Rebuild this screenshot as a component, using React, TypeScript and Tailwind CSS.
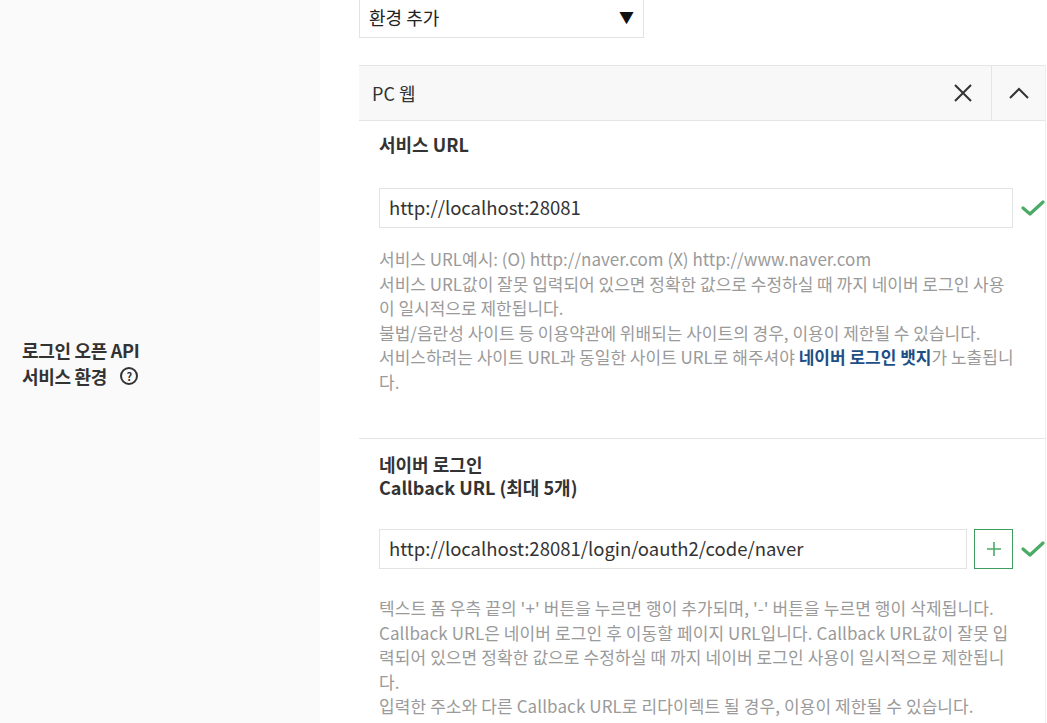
import React from 'react';

const font = { fontFamily: '"Noto Sans CJK KR", "Noto Sans", sans-serif' };

const Check = () => (
  <svg width="24" height="18" viewBox="0 0 24 18" className="shrink-0">
    <path d="M2 9 L9 15 L22 3" fill="none" stroke="#4caa67" strokeWidth="3.2" strokeLinecap="round" strokeLinejoin="round" />
  </svg>
);

export default function App() {
  return (
    <div className="w-[1047px] h-[723px] overflow-hidden bg-white text-[#333]" style={font}>
      <div className="flex -mt-[3px]">
        {/* Left label column */}
        <div className="w-[320px] shrink-0 bg-[#fafafa] pl-[22px] pt-[340px] min-h-[760px]">
          <p className="text-[18px] font-bold leading-[26px] text-[#333] tracking-[-0.3px]">로그인 오픈 API</p>
          <p className="flex items-center text-[18px] font-bold leading-[26px] text-[#333] tracking-[-0.3px]">
            서비스 환경
            <span className="ml-[13px] inline-flex h-[18px] w-[18px] items-center justify-center rounded-full border-2 border-[#333] text-[11px] font-bold leading-none">?</span>
          </p>
        </div>

        {/* Right content */}
        <div className="flex-1 pl-[39px]">
          <div className="flex h-[41px] w-[285px] items-center justify-between border border-[#e3e3e3] bg-white pl-[9px] pr-[9px]">
            <span className="text-[18px] text-[#222]">환경 추가</span>
            <span className="text-[15px] text-[#111]">▼</span>
          </div>

          <div className="mt-[27px] w-[687px] border-r border-[#eeeeee]">
            {/* header */}
            <div className="flex h-[56px] items-stretch border-y border-[#e5e5e5] bg-[#f8f8f8]">
              <div className="flex flex-1 items-center pl-[13px] text-[18px] text-[#333]">PC 웹</div>
              <div className="flex w-[56px] items-center justify-center">
                <svg width="20" height="20" viewBox="0 0 20 20">
                  <path d="M2 2 L18 18 M18 2 L2 18" stroke="#333" strokeWidth="2" fill="none" />
                </svg>
              </div>
              <div className="flex w-[54px] items-center justify-center border-l border-[#e5e5e5]">
                <svg width="22" height="14" viewBox="0 0 22 14">
                  <path d="M2 12 L11 3 L20 12" stroke="#333" strokeWidth="2" fill="none" />
                </svg>
              </div>
            </div>

            {/* Service URL section */}
            <div className="border-b border-[#e5e5e5] pl-[20px] pt-[11px] pb-[44px]">
              <p className="text-[18px] font-bold leading-[24px] text-[#333]">서비스 URL</p>
              <div className="mt-[32px] flex items-center">
                <div className="flex h-[40px] w-[637px] items-center border border-[#e3e3e3] pl-[9px] text-[18.5px] text-[#333]">
                  http://localhost:28081
                </div>
                <div className="ml-[8px]"><Check /></div>
              </div>
              <div className="mt-[19px] w-[640px] text-[17px] leading-[24.5px] text-[#9a9a9a]">
                <p>서비스 URL예시: (O) http://naver.com (X) http://www.naver.com</p>
                <p>서비스 URL값이 잘못 입력되어 있으면 정확한 값으로 수정하실 때 까지 네이버 로그인 사용이 일시적으로 제한됩니다.</p>
                <p>불법/음란성 사이트 등 이용약관에 위배되는 사이트의 경우, 이용이 제한될 수 있습니다.</p>
                <p>
                  서비스하려는 사이트 URL과 동일한 사이트 URL로 해주셔야 <span className="font-bold text-[#1d4f86]">네이버 로그인 뱃지</span>가 노출됩니다.
                </p>
              </div>
            </div>

            {/* Callback URL section */}
            <div className="pl-[20px] pt-[14px] pb-[30px]">
              <p className="text-[18px] font-bold leading-[23px] text-[#333]">네이버 로그인</p>
              <p className="text-[18px] font-bold leading-[23px] text-[#333]">Callback URL (최대 5개)</p>
              <div className="mt-[30px] flex items-center">
                <div className="flex h-[40px] w-[591px] items-center border border-[#e3e3e3] pl-[9px] text-[18.5px] text-[#333]">
                  http://localhost:28081/login/oauth2/code/naver
                </div>
                <div className="ml-[7px] flex h-[40px] w-[39px] items-center justify-center border border-[#3f9e5f]">
                  <svg width="16" height="16" viewBox="0 0 16 16">
                    <path d="M8 1 V15 M1 8 H15" stroke="#4caa67" strokeWidth="1.6" fill="none" />
                  </svg>
                </div>
                <div className="ml-[8px]"><Check /></div>
              </div>
              <div className="mt-[27px] w-[637px] text-[17px] leading-[24.5px] tracking-[0.1px] text-[#9a9a9a]">
                <p>텍스트 폼 우측 끝의 '+' 버튼을 누르면 행이 추가되며, '-' 버튼을 누르면 행이 삭제됩니다.</p>
                <p>Callback URL은 네이버 로그인 후 이동할 페이지 URL입니다. Callback URL값이 잘못 입력되어 있으면 정확한 값으로 수정하실 때 까지 네이버 로그인 사용이 일시적으로 제한됩니다.</p>
                <p>입력한 주소와 다른 Callback URL로 리다이렉트 될 경우, 이용이 제한될 수 있습니다.</p>
              </div>
            </div>
          </div>
        </div>
      </div>
    </div>
  );
}
